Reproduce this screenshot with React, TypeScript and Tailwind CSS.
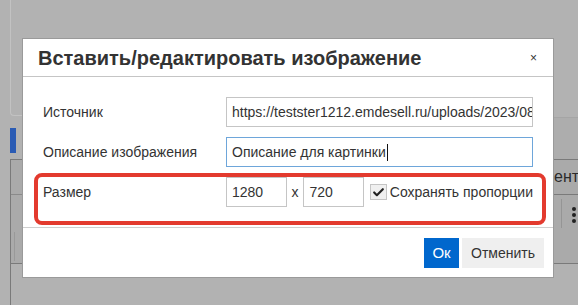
import { Check } from "lucide-react";

const font = { fontFamily: '"Liberation Sans", Arial, sans-serif' };

function Field({
  label,
  children
}: {
  label: string;
  children: React.ReactNode;
}) {
  return (
    <div className="flex h-[30px] items-center">
      <span className="w-[183px] shrink-0 text-[14px] text-[#333]">{label}</span>
      {children}
    </div>
  );
}

export default function App() {
  return (
    <div
      className="relative h-[305px] w-[578px] overflow-hidden bg-[#b2b2b2]"
      style={font}
    >
      {/* page under the modal overlay */}
      <div className="flex h-full">
        <div className="ml-[10px] flex w-[12px] flex-col">
          <div className="h-[116px] rounded-bl-[4px] border-b border-l border-[#c2c2c2]" />
          <div className="mt-[12px] h-[25px] w-[6px] bg-[#2a5bb4]" />
          <div className="mt-[6px] flex-1 border-l border-t border-[#7a7a7a]">
            <div className="h-[35px] border-b border-[#8a8a8a] bg-[#aaaaaa]" />
            <div className="h-[69px] border-b border-[#7a7a7a] bg-[#aaaaaa] pl-[3px] pt-[37px]">
              <div className="h-[29px] border-l border-[#999]" />
            </div>
          </div>
        </div>
        <div className="flex-1" />
        <div className="flex w-[24px] flex-col">
          <div className="h-[117px]" />
          <div className="h-[42px] border-t border-[#a5a5a5] bg-[#adadad]" />
          <div className="h-[35px] border-t border-[#7a7a7a] bg-[#aaaaaa] pt-[7px] text-[16px] leading-[20px] text-[#2b2b2b]">
            ент
          </div>
          <div className="flex h-[70px] items-start border-b border-t border-[#7a7a7a] bg-[#aaaaaa] pt-[4px]">
            <div className="ml-[7px] h-[29px] border-l border-[#959595]" />
            <div className="ml-[10px] mt-[8px] flex flex-col gap-[2px]">
              <span className="h-[4px] w-[4px] rounded-full bg-[#222]" />
              <span className="h-[4px] w-[4px] rounded-full bg-[#222]" />
              <span className="h-[4px] w-[4px] rounded-full bg-[#222]" />
            </div>
          </div>
        </div>
      </div>

      {/* modal */}
      <div className="absolute left-[22px] top-[38px] flex w-[532px] flex-col border border-[#9a9a9a] bg-white">
        <div className="flex h-[38px] items-center justify-between border-b border-[#c5c5c5] pl-[15px] pr-[16px]">
          <h1 className="text-[20px] font-bold text-[#333]">
            Вставить/редактировать изображение
          </h1>
          <span className="text-[12px] leading-none text-[#333]">×</span>
        </div>

        <div className="relative flex flex-col gap-[10px] px-[20px] pb-[20px] pt-[20px]">
          <Field label="Источник">
            <div className="h-[30px] w-[308px] overflow-hidden whitespace-nowrap border border-[#c5c5c5] px-[5px] text-[14px] leading-[28px] text-[#333]">
              https://testster1212.emdesell.ru/uploads/2023/08/image.png
            </div>
          </Field>
          <Field label="Описание изображения">
            <div className="flex h-[30px] w-[308px] items-center overflow-hidden whitespace-nowrap border border-[#6ea6da] px-[5px] text-[14px] text-[#333]">
              Описание для картинки
              <span className="ml-px h-[17px] w-px bg-[#111]" />
            </div>
          </Field>
          <Field label="Размер">
            <div className="h-[30px] w-[61px] border border-[#c5c5c5] px-[5px] text-[14px] leading-[28px] text-[#333]">
              1280
            </div>
            <span className="w-[17px] text-center text-[14px] text-[#333]">x</span>
            <div className="h-[30px] w-[61px] border border-[#c5c5c5] px-[5px] text-[14px] leading-[28px] text-[#333]">
              720
            </div>
            <div className="ml-[6px] flex h-[16px] w-[17px] items-center justify-center border border-[#c5c5c5] bg-[#f0f0f0]">
              <Check className="h-[13px] w-[13px] text-[#222]" strokeWidth={4} />
            </div>
            <span className="ml-[3px] whitespace-nowrap text-[14px] text-[#333]">
              Сохранять пропорции
            </span>
          </Field>

          <div className="absolute left-[11px] top-[96px] h-[52px] w-[512px] rounded-[8px] border-[4px] border-[#e33a2e]" />
        </div>

        <div className="flex h-[50px] items-start justify-end gap-[3px] border-t border-[#cfcfcf] pr-[9px] pt-[10px]">
          <button className="h-[30px] w-[35px] bg-[#0067cd] text-[15px] text-white">
            Ок
          </button>
          <button className="h-[30px] w-[82px] bg-[#efefef] text-[14px] text-[#333]">
            Отменить
          </button>
        </div>
      </div>
    </div>
  );
}
